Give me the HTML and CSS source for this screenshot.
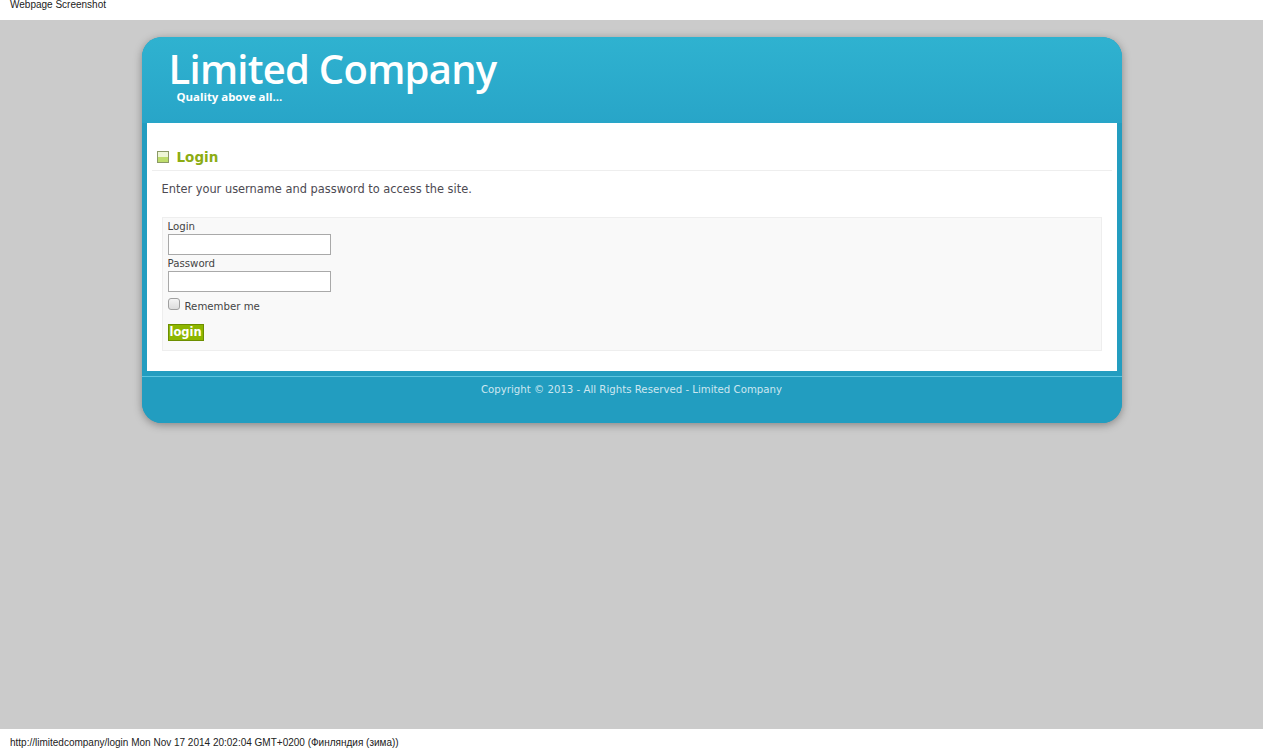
FILE: index.html
```html
<!DOCTYPE html>
<html>
<head>
<meta charset="utf-8">
<title>Login</title>
<link rel="stylesheet" href="styles.css">
</head>
<body>
<div class="topbar">Webpage Screenshot</div>
<div class="stage">
  <div class="wrap">
    <div class="header">
      <div class="logo">Limited Company</div>
      <div class="slogan">Quality above all...</div>
    </div>
    <div class="content">
      <h2 class="title"><span class="ico"></span>Login</h2>
      <p class="intro">Enter your username and password to access the site.</p>
      <form class="box">
        <label class="lbl">Login</label>
        <input class="field" type="text">
        <label class="lbl">Password</label>
        <input class="field" type="password">
        <div class="remember"><span class="chk"></span><span>Remember me</span></div>
        <button class="btn" type="button">login</button>
      </form>
    </div>
    <div class="footer">Copyright © 2013 - All Rights Reserved - Limited Company</div>
  </div>
</div>
<div class="bottombar">http://limitedcompany/login Mon Nov 17 2014 20:02:04 GMT+0200 (Финляндия (зима))</div>
</body>
</html>
```
FILE: styles.css
```css
* { box-sizing: border-box; }
html, body { margin: 0; padding: 0; }
body { font-family: "DejaVu Sans", Verdana, sans-serif; background: #fff; width: 1263px; height: 749px; overflow: hidden; }
.topbar { height: 20px; padding: 0 10px; font-family: "Liberation Sans", Arial, sans-serif; font-size: 10px; line-height: 10px; color: #222; }
.stage { height: 709px; background: #cbcbcb; padding-top: 17px; }
.wrap { width: 980px; margin: 0 auto; border-radius: 20px; background: #239dc0; box-shadow: 0 2px 8px rgba(0,0,0,0.35); overflow: hidden; }
.header { height: 86px; background: linear-gradient(#2fb2d0, #28a5c8); padding: 12px 0 0 27px; color: #fff; }
.logo { font-family: "Open Sans", "DejaVu Sans", sans-serif; font-weight: 600; font-size: 40px; line-height: 40px; height: 41px; letter-spacing: -0.75px; }
.slogan { font-family: "Open Sans", sans-serif; font-weight: 700; font-size: 11.4px; line-height: 13px; margin: 0 0 0 8px; }
.content { margin: 0 5px; background: #fff; height: 248px; padding: 26px 5px 0; }
.title { margin: 0; font-size: 13.5px; font-weight: bold; color: #8cac13; display: flex; align-items: center; gap: 8px; padding: 0 0 5px 5px; border-bottom: 1px solid #eee; line-height: 16px; font-family: "DejaVu Sans", Tahoma, sans-serif; }
.ico { width: 12px; height: 12px; border: 1px solid #8b9a66; background: linear-gradient(#eef6d6 0, #eef6d6 45%, #bedd6c 55%, #bedd6c 100%); }
.intro { margin: 11px 0 0 10px; font-size: 11.4px; color: #4d4a52; line-height: 14px; }
.box { margin: 21px 10px 0; background: #f9f9f9; border: 1px solid #eeeeee; height: 134px; padding: 3px 5px 0; display: flex; flex-direction: column; align-items: flex-start; }
.lbl { font-size: 10.2px; color: #444; line-height: 12px; height: 12px; }
.field { width: 163px; height: 21px; border: 1px solid #a9a9a9; background: #fff; margin: 1px 0 3px; padding: 0; }
.remember { display: flex; align-items: flex-end; gap: 5px; font-size: 10.2px; color: #444; margin-top: 3px; line-height: 12px; }
.chk { width: 12px; height: 12px; border: 1px solid #a0a0a0; border-radius: 3px; background: linear-gradient(#f4f4f4, #dcdcdc); margin-bottom: 3px; }
.btn { margin-top: 11px; background: #8db600; border: 1px solid #6d8f00; color: #fff; font-family: "DejaVu Sans", Tahoma, sans-serif; font-weight: bold; font-size: 11.5px; line-height: 13px; padding: 1px 1px; height: 17px; width: 36px; }
.footer { border-top: 5px solid #239dc0; height: 52px; background: #229dc0; position: relative; color: #cde7f0; font-size: 10.2px; text-align: center; padding-top: 7px; line-height: 13px; }
.footer::before { content: ""; position: absolute; left: 0; right: 0; top: 0; height: 1px; background: #5ec6e0; }
.bottombar { height: 20px; padding: 8px 10px 0; font-family: "Liberation Sans", Arial, sans-serif; font-size: 10px; line-height: 12px; color: #222; }
```
